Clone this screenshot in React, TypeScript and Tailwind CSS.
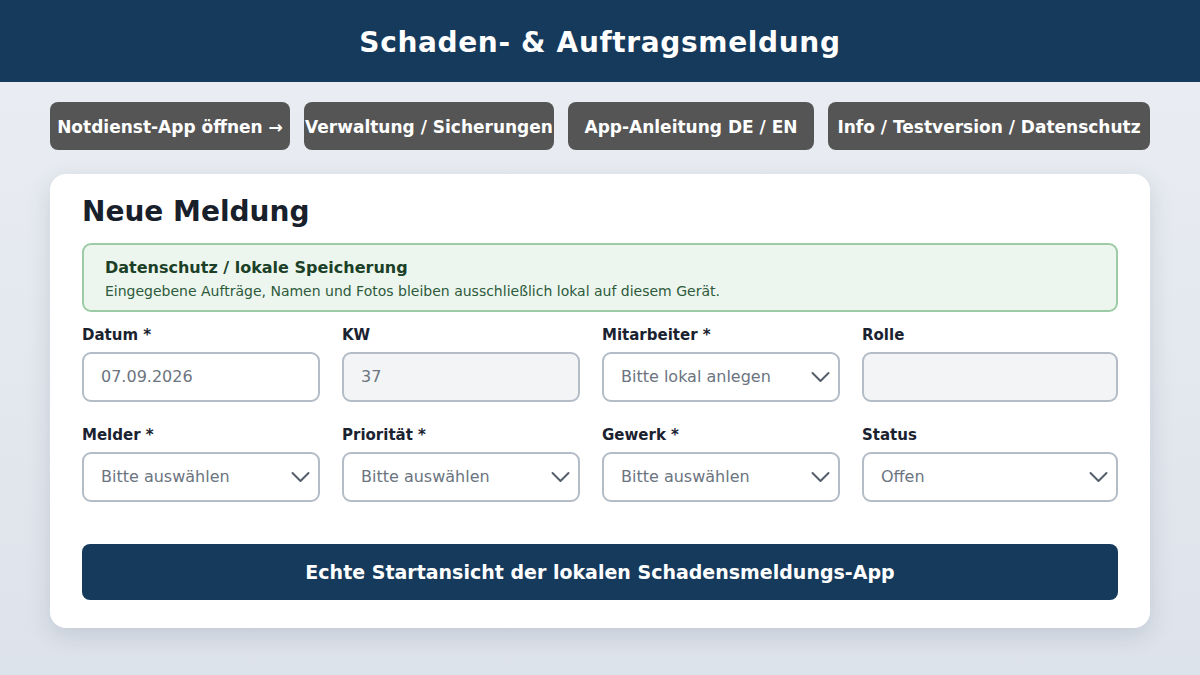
import React from 'react';

const font = { fontFamily: '"DejaVu Sans", Verdana, sans-serif' };

function Chevron() {
  return (
    <svg
      width="19"
      height="11"
      viewBox="0 0 19 11"
      fill="none"
      className="absolute right-[8px] top-1/2 -translate-y-1/2"
    >
      <path d="M1.5 1.5 L9.5 9.5 L17.5 1.5" stroke="#555f6b" strokeWidth="2" strokeLinecap="round" strokeLinejoin="round" />
    </svg>
  );
}

function Field({
  label,
  value,
  select,
  muted,
}: {
  label: string;
  value?: string;
  select?: boolean;
  muted?: boolean;
}) {
  return (
    <div className="flex flex-col">
      <label className="text-[15px] font-bold text-[#1a2230] leading-[20px] mb-[7px]">{label}</label>
      <div
        className={
          'relative h-[50px] rounded-[9px] border-2 border-[#b3bcc7] flex items-center px-[17px] text-[16px] text-[#6b7480] ' +
          (muted ? 'bg-[#f3f4f6]' : 'bg-white')
        }
      >
        {value}
        {select && <Chevron />}
      </div>
    </div>
  );
}

const navButtons = [
  { label: 'Notdienst-App öffnen →', w: 'w-[240px]' },
  { label: 'Verwaltung / Sicherungen', w: 'w-[250px]' },
  { label: 'App-Anleitung DE / EN', w: 'w-[246px]' },
  { label: 'Info / Testversion / Datenschutz', w: 'w-[322px]' },
];

export default function App() {
  return (
    <div style={font} className="min-h-[675px] bg-gradient-to-b from-[#ebeef3] to-[#dde3eb]">
      <header className="h-[82px] bg-[#163a5c] flex items-center justify-center pt-[3px]">
        <h1 className="text-[28px] font-bold text-white tracking-[0.65px]">Schaden- &amp; Auftragsmeldung</h1>
      </header>

      <main className="w-[1100px] mx-auto">
        <nav className="flex gap-[14px] pt-[20px]">
          {navButtons.map((b) => (
            <button
              key={b.label}
              className={`${b.w} h-[48px] rounded-[8px] bg-[#555555] text-white text-[17px] font-bold whitespace-nowrap flex items-center justify-center pt-[3px]`}
            >
              {b.label}
            </button>
          ))}
        </nav>

        <section className="mt-[24px] bg-white rounded-[16px] shadow-[0_8px_24px_rgba(30,50,80,0.14)] px-[32px] pt-[19px] pb-[28px]">
          <h2 className="text-[28px] font-bold text-[#18202c] leading-[38px]">Neue Meldung</h2>

          <div className="mt-[12px] border-2 border-[#9dcba5] bg-[#ecf6ee] rounded-[9px] px-[21px] pt-[12px] pb-[9px]">
            <div className="text-[16px] font-bold text-[#1b4027] leading-[22px]">Datenschutz / lokale Speicherung</div>
            <div className="text-[14px] text-[#2e5a3c] leading-[20px] mt-[2px]">
              Eingegebene Aufträge, Namen und Fotos bleiben ausschließlich lokal auf diesem Gerät.
            </div>
          </div>

          <div className="mt-[13px] grid grid-cols-[238px_238px_238px_256px] gap-x-[22px] gap-y-[23px]">
            <Field label="Datum *" value="07.09.2026" />
            <Field label="KW" value="37" muted />
            <Field label="Mitarbeiter *" value="Bitte lokal anlegen" select />
            <Field label="Rolle" muted />
            <Field label="Melder *" value="Bitte auswählen" select />
            <Field label="Priorität *" value="Bitte auswählen" select />
            <Field label="Gewerk *" value="Bitte auswählen" select />
            <Field label="Status" value="Offen" select />
          </div>

          <button className="mt-[42px] w-full h-[56px] rounded-[8px] bg-[#163a5c] text-white text-[19px] font-bold">
            Echte Startansicht der lokalen Schadensmeldungs-App
          </button>
        </section>
      </main>
    </div>
  );
}
